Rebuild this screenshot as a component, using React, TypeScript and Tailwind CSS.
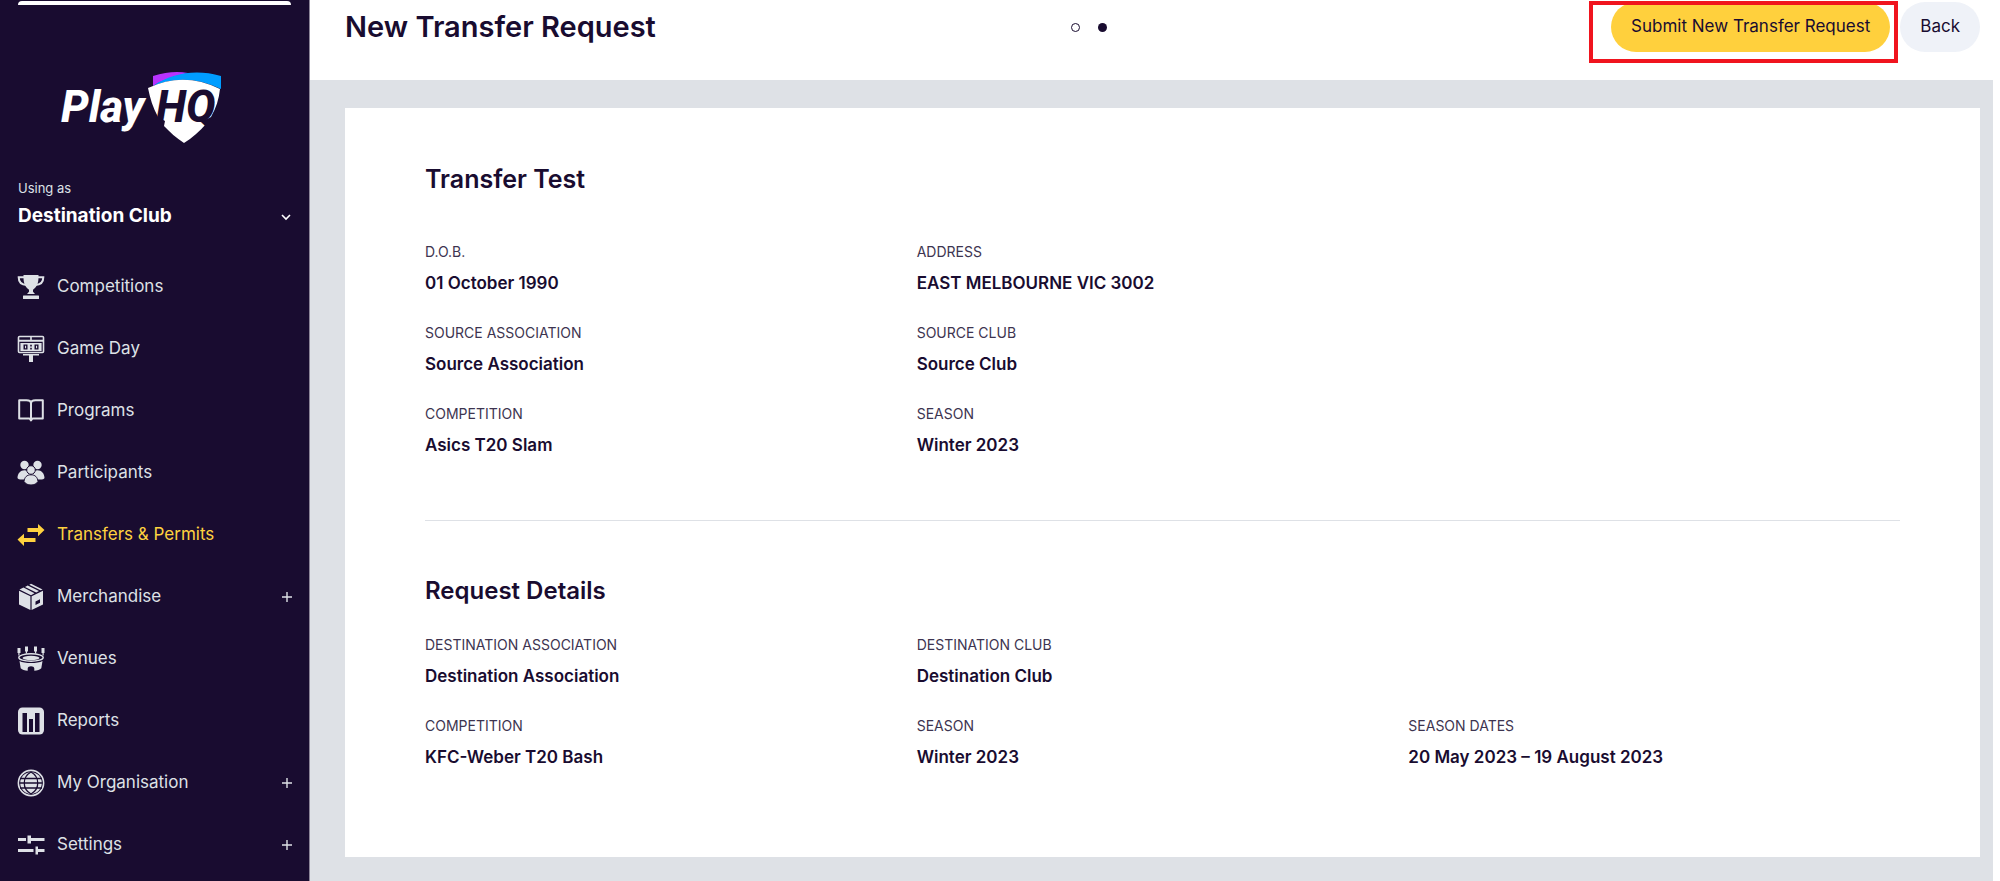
import React, { useState } from "react";

interface NavItem {
  label: string;
  icon: React.ReactNode;
  expandable?: boolean;
}

interface Detail {
  label: string;
  value: string;
}

const Icon = ({ children }: { children: React.ReactNode }) => (
  <svg viewBox="0 0 28 28" className="w-7 h-7 shrink-0" fill="currentColor" aria-hidden="true">
    {children}
  </svg>
);

const navItems: NavItem[] = [
  {
    label: "Competitions",
    icon: (
      <Icon>
        <path d="M6.5 2h15v2.5c0 6-2.2 10-5.5 12.2v2l2 2.3h-8l2-2.3v-2C8.7 14.5 6.5 10.5 6.5 4.5z" />
        <path d="M7 4.2H1.7c0 4.8 3 7.6 8 7.8M21 4.2h5.3c0 4.8-3 7.6-8 7.8" fill="none" stroke="currentColor" strokeWidth="2" />
        <rect x="6" y="22.5" width="16" height="3.5" rx="0.5" />
      </Icon>
    ),
  },
  {
    label: "Game Day",
    icon: (
      <Icon>
        <rect x="1.5" y="1.5" width="25" height="16" rx="1" fill="none" stroke="currentColor" strokeWidth="1.6" />
        <path d="M1 4.8h26v2H1zM13.2 1.5h1.6v4h-1.6z" />
        <rect x="3.4" y="8" width="21.2" height="8" />
        <path d="M6.5 9.5h4v5h-4zM17.5 9.5h4v5h-4z" fill="#190c30" />
        <path d="M8 10.8h1.1v2.4H8zM19 10.8h1.1v2.4H19z" />
        <path d="M13.2 9.8h1.6v1.6h-1.6zM13.2 12.8h1.6v1.6h-1.6z" fill="#190c30" />
        <path d="M6 19h16v1.5H6zM12 20h4v7h-4z" />
      </Icon>
    ),
  },
  {
    label: "Programs",
    icon: (
      <Icon>
        <path d="M14 23.5L12.5 21.5H2.2V3.2H9.5C12 3.2 14 4.5 14 6.5C14 4.5 16 3.2 18.5 3.2H25.8V21.5H15.5zM14 6v17" fill="none" stroke="currentColor" strokeWidth="2" strokeLinejoin="round" />
      </Icon>
    ),
  },
  {
    label: "Participants",
    icon: (
      <Icon>
        <circle cx="7.5" cy="6" r="4.2" />
        <circle cx="20.5" cy="6" r="4.2" />
        <path d="M.5 19C.5 14.5 3.5 11.2 7.5 11.2S14 14.5 14 20.500H5C2.500 20.500 1 20 .5 19zM27.500 19C27.500 14.500 24.500 11.200 20.500 11.200S14 14.500 14 20.500H23C25.500 20.500 27 20 27.500 19z" />
        <circle cx="14" cy="11" r="4.3" stroke="#190c30" />
        <path d="M7 22.5C7.5 18 10 15.8 14 15.8S20.5 18 21 22.5C19.5 25 17 26 14 26S8.5 25 7 22.5z" stroke="#190c30" />
      </Icon>
    ),
  },
  {
    label: "Transfers & Permits",
    icon: (
      <Icon>
        <path d="M10.5 7H21V3l6.5 6-6.5 6.2V11H10.5zM18.5 17H7v-4.2L.5 18.5 7 25v-4h11.5z" />
      </Icon>
    ),
  },
  {
    label: "Merchandise",
    expandable: true,
    icon: (
      <Icon>
        <path d="M2 7.8L13.4 13.3V27L2 21.5zM26 7.8L14.6 13.3V27L26 21.5z" />
        <path d="M2.5 6.5L6.5 4.6 17.5 10.2 14 12.2zM8 3.9L10.7 2.6 22 7.9 19.2 9.4zM12.3 1.8L14 .8 25.6 6.5 23.5 7.3z" />
        <path d="M18.5 18.5l4.5-2.3v3.6l-4.5 2.3z" fill="#190c30" />
      </Icon>
    ),
  },
  {
    label: "Venues",
    icon: (
      <Icon>
        <path d="M.5 3h3v5h-1v2.500H1.300V8H.5zM8 1.500h3v5h-1v2H8.800v-2H8zM17 1.500h3v5h-.8v2H18v-2h-1zM24.500 3h3v5h-.8v2.500h-1.200V8h-1z" />
        <ellipse cx="14" cy="12.5" rx="12.2" ry="3.8" fill="none" stroke="currentColor" strokeWidth="1.4" />
        <ellipse cx="14" cy="13" rx="8.5" ry="2.2" />
        <path d="M2.5 16c5 2.7 18 2.7 23 0l-1.2 7.2c-1.5 1.5-4 2.2-7 2.5v-2.2c0-3-6.6-3-6.600 0v2.200c-3-.3-5.500-1-7-2.500z" />
      </Icon>
    ),
  },
  {
    label: "Reports",
    icon: (
      <Icon>
        <rect x="1" y="0.5" width="26" height="27" rx="4.5" />
        <path d="M5.500 6H10v19H5.500zM12 12h4v13h-4zM18 6h4.500v19H18z" fill="#190c30" />
      </Icon>
    ),
  },
  {
    label: "My Organisation",
    expandable: true,
    icon: (
      <Icon>
        <circle cx="14" cy="14" r="12.6" fill="none" stroke="currentColor" strokeWidth="1.6" />
        <circle cx="14" cy="14" r="10.8" />
        <path d="M3 9.5h22M2.500 14h23M3 19h22M14 3C5 8 5 20 14 25M14 3c9 5 9 17 0 22" fill="none" stroke="#190c30" strokeWidth="1.300" />
      </Icon>
    ),
  },
  {
    label: "Settings",
    expandable: true,
    icon: (
      <Icon>
        <path d="M1 7h8v3H1zM10.500 4.500H14V7h13.500v3H14v2.500h-3.500zM1 18h15.500v3H1zM18.500 15.500H21V18h6.500v3H21v2.500h-2.500z" />
      </Icon>
    ),
  },
];

const transferDetails: Detail[][] = [
  [
    { label: "D.O.B.", value: "01 October 1990" },
    { label: "ADDRESS", value: "EAST MELBOURNE VIC 3002" },
  ],
  [
    { label: "SOURCE ASSOCIATION", value: "Source Association" },
    { label: "SOURCE CLUB", value: "Source Club" },
  ],
  [
    { label: "COMPETITION", value: "Asics T20 Slam" },
    { label: "SEASON", value: "Winter 2023" },
  ],
];

const requestDetails: Detail[][] = [
  [
    { label: "DESTINATION ASSOCIATION", value: "Destination Association" },
    { label: "DESTINATION CLUB", value: "Destination Club" },
  ],
  [
    { label: "COMPETITION", value: "KFC-Weber T20 Bash" },
    { label: "SEASON", value: "Winter 2023" },
    { label: "SEASON DATES", value: "20 May 2023 – 19 August 2023" },
  ],
];

function Logo() {
  return (
    <svg viewBox="60 70 164 76" className="w-[164px] h-[76px]" role="img" aria-label="PlayHQ">
      <path d="M153 76Q172 70 188 73C174 76 163 80 153 86z" fill="#b833ff" />
      <path d="M153 86C172 73 196 69 221 76V89Q186 72 153 86z" fill="#009dff" />
      <path d="M148 88Q184 71 220 89C219 99 216 108 211 117L203 121L206 124C200 131 192 138 184 143C176 138 170 132 164 126L165 121L158 117C153 108 150 98 148 88z" fill="#fff" />
      <text x="61" y="122" fontSize="44" className="font-[Roboto,sans-serif] font-extrabold italic" fill="#fff">Play</text>
      <text x="156" y="122" fontSize="44" className="font-[Roboto,sans-serif] font-extrabold italic" fill="#190c30">HQ</text>
    </svg>
  );
}

function DetailList({ rows }: { rows: Detail[][] }) {
  return (
    <div className="space-y-7">
      {rows.map((row, i) => (
        <dl key={i} className="grid grid-cols-3">
          {row.map((item) => (
            <div key={item.label}>
              <dt className="text-sm leading-5 text-[#3d3450]">{item.label}</dt>
              <dd className="mt-[9px] text-[17px] leading-6 font-semibold">{item.value}</dd>
            </div>
          ))}
        </dl>
      ))}
    </div>
  );
}

export default function App() {
  const [active, setActive] = useState("Transfers & Permits");

  return (
    <div className="flex min-h-screen bg-white text-[#190c30] font-[Inter,sans-serif]">
      {/* Sidebar */}
      <aside className="w-[310px] shrink-0 bg-[#190c30] text-[#dee1e6] border-r border-[#8c8598]">
        <div className="mx-[18px] mt-px h-1 rounded-t bg-white" />
        <div className="pl-[60px] pt-[65px]">
          <Logo />
        </div>

        <button className="w-full px-[18px] mt-8 flex items-end justify-between text-left">
          <span>
            <span className="block text-[13px] leading-5">Using as</span>
            <span className="block mt-1 text-[19px] leading-7 font-bold text-white">Destination Club</span>
          </span>
          <svg viewBox="0 0 10 8" className="w-[10px] h-2 mb-[9px]" fill="none" stroke="white" strokeWidth="1.6" aria-hidden="true">
            <path d="M1 2l4 4 4-4" />
          </svg>
        </button>

        <nav className="mt-[26px]">
          {navItems.map((item) => (
            <a
              key={item.label}
              href="#"
              onClick={() => setActive(item.label)}
              className={`h-[62px] px-[17px] flex items-center gap-3 text-[17px] ${
                active === item.label ? "text-[#ffd23f]" : "text-[#dee1e6]"
              }`}
            >
              {item.icon}
              <span className="flex-1">{item.label}</span>
              {item.expandable && (
                <svg viewBox="0 0 10 10" className="w-[10px] h-[10px]" stroke="currentColor" strokeWidth="1.4" aria-hidden="true">
                  <path d="M5 0v10M0 5h10" />
                </svg>
              )}
            </a>
          ))}
        </nav>
      </aside>

      <div className="flex-1 min-w-0 flex flex-col mr-[7px]">
        {/* Header */}
        <header className="h-20 pl-[35px] pr-[13px] pt-[2px] flex items-start">
          <h1 className="w-[44%] text-[29px] leading-[50px] font-semibold">New Transfer Request</h1>
          <div className="ml-[7px] h-[50px] flex items-center gap-[18px]">
            <span className="w-[9px] h-[9px] rounded-full border border-[#190c30]" />
            <span className="w-[9px] h-[9px] rounded-full bg-[#190c30]" />
          </div>
          <div className="ml-auto flex gap-[10px]">
            <div className="relative">
              <button className="h-[50px] px-5 rounded-full bg-[#ffd03d] text-[17px] whitespace-nowrap">
                Submit New Transfer Request
              </button>
              <span className="absolute -top-px -bottom-[11px] -left-[22px] -right-2 border-4 border-[#f0141e] pointer-events-none" />
            </div>
            <button className="h-[50px] px-5 rounded-full bg-[#eff2f8] text-[17px]">Back</button>
          </div>
        </header>

        {/* Content */}
        <main className="flex-1 bg-[#dee1e6] pt-7 pl-[35px] pr-[13px] pb-[23px]">
          <div className="bg-white px-20 pt-[55px] pb-[88px]">
            <h2 className="text-[25px] leading-8 font-semibold mb-[47px]">Transfer Test</h2>
            <DetailList rows={transferDetails} />
            <hr className="mt-[63px] mb-[54px] border-[#dee1e6]" />
            <h2 className="text-2xl leading-8 font-semibold mb-7">Request Details</h2>
            <DetailList rows={requestDetails} />
          </div>
        </main>
      </div>
    </div>
  );
}
